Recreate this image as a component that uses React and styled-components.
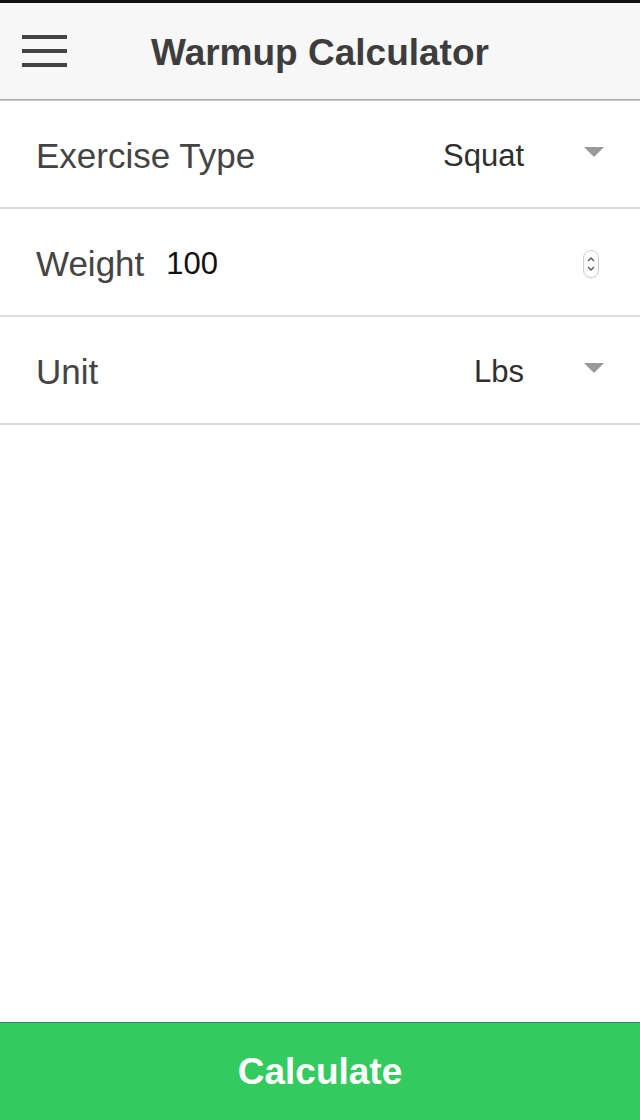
import React from "react";
import styled, { createGlobalStyle } from "styled-components";

const GlobalStyle = createGlobalStyle`
  html, body {
    margin: 0;
    padding: 0;
    background: #ffffff;
  }
  body {
    font-family: "Liberation Sans", Arial, sans-serif;
  }
`;

const Screen = styled.div`
  display: flex;
  flex-direction: column;
  width: 640px;
  height: 1120px;
  border-top: 3px solid #111111;
  box-sizing: border-box;
  background: #ffffff;
`;

const Header = styled.header`
  position: relative;
  display: flex;
  align-items: center;
  justify-content: center;
  height: 97px;
  background: #f7f7f7;
  border-bottom: 1px solid #cdcdcd;
  box-shadow: inset 0 -1px 0 #a8a8a8;
  flex-shrink: 0;
`;

const MenuButton = styled.button`
  position: absolute;
  left: 22px;
  top: 32px;
  display: flex;
  flex-direction: column;
  gap: 10px;
  width: 45px;
  padding: 0;
  border: none;
  background: none;
`;

const Bar = styled.span`
  display: block;
  height: 4px;
  width: 45px;
  background: #444444;
`;

const Title = styled.h1`
  margin: 0;
  padding-top: 2px;
  font-size: 37px;
  font-weight: 700;
  color: #3d3d3d;
`;

const Form = styled.main`
  flex: 1;
  display: flex;
  flex-direction: column;
`;

const Row = styled.div`
  display: flex;
  align-items: center;
  height: 106px;
  padding: 0 36px;
  border-bottom: 2px solid #dcdcdc;
`;

const Label = styled.span`
  font-size: 35px;
  color: #444444;
  padding-top: 4px;
`;

const Value = styled.span`
  margin-left: auto;
  padding-top: 4px;
  font-size: 31px;
  color: #2f2f2f;
`;

const Caret = styled.span`
  position: relative;
  top: -2px;
  width: 0;
  height: 0;
  margin-left: 60px;
  border-left: 10px solid transparent;
  border-right: 10px solid transparent;
  border-top: 10px solid #999999;
`;

const NumberText = styled.span`
  margin-left: 22px;
  padding-top: 4px;
  font-size: 31px;
  color: #111111;
`;

const Spinner = styled.span`
  position: relative;
  top: 2px;
  margin-left: auto;
  margin-right: 5px;
  width: 14px;
  height: 26px;
  border: 1px solid #cfcfcf;
  border-radius: 8px;
  display: flex;
  align-items: center;
  justify-content: center;
  box-shadow: 0 1px 1px rgba(0, 0, 0, 0.08);
`;

const CalculateButton = styled.button`
  flex-shrink: 0;
  height: 98px;
  width: 100%;
  padding: 0;
  border: none;
  border-top: 1px solid #2a8c6c;
  background: #34cb5e;
  color: #ffffff;
  font-family: "Liberation Sans", Arial, sans-serif;
  font-size: 37px;
  font-weight: 700;
`;

const SelectRow = ({ label, value }) => (
  <Row>
    <Label>{label}</Label>
    <Value>{value}</Value>
    <Caret />
  </Row>
);

export default function App() {
  return (
    <>
      <GlobalStyle />
      <Screen>
        <Header>
          <MenuButton aria-label="Menu">
            <Bar />
            <Bar />
            <Bar />
          </MenuButton>
          <Title>Warmup Calculator</Title>
        </Header>
        <Form>
          <SelectRow label="Exercise Type" value="Squat" />
          <Row>
            <Label>Weight</Label>
            <NumberText>100</NumberText>
            <Spinner>
              <svg width="10" height="18" viewBox="0 0 10 18">
                <path d="M2 6 L5 3 L8 6" fill="none" stroke="#555" strokeWidth="1.3" />
                <path d="M2 12 L5 15 L8 12" fill="none" stroke="#555" strokeWidth="1.3" />
              </svg>
            </Spinner>
          </Row>
          <SelectRow label="Unit" value="Lbs" />
        </Form>
        <CalculateButton>Calculate</CalculateButton>
      </Screen>
    </>
  );
}
